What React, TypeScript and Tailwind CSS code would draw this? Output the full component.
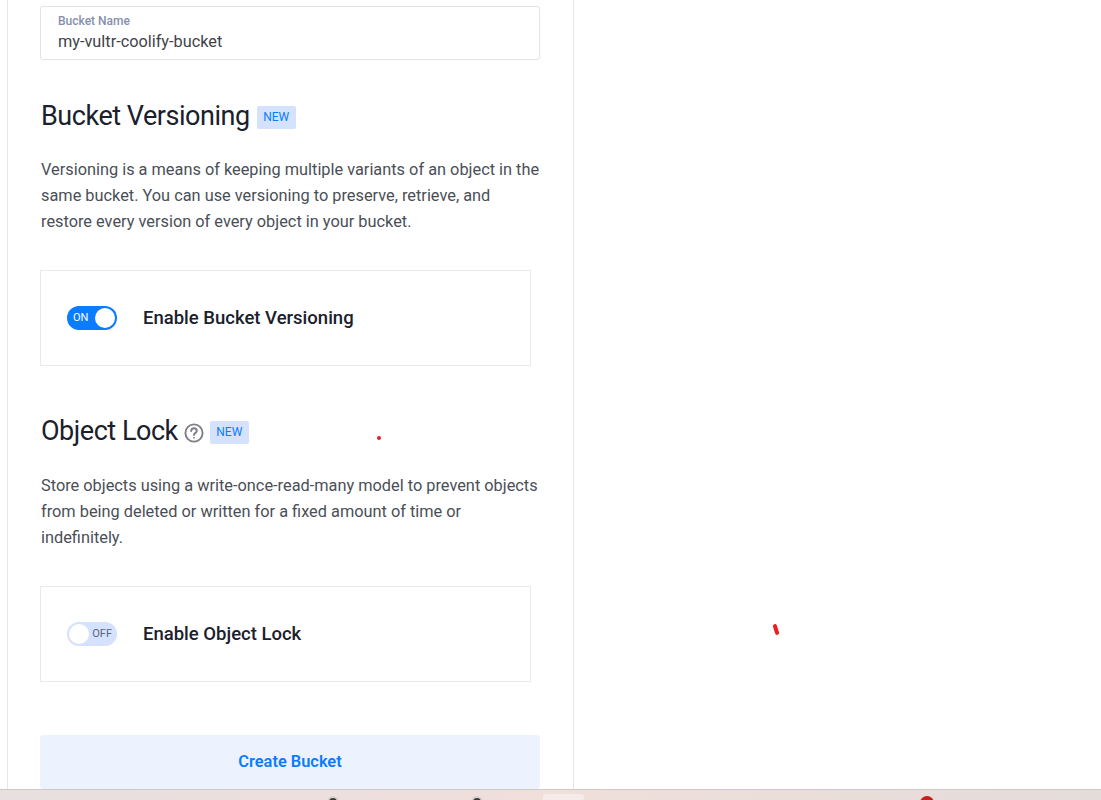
import React from 'react';

function NewBadge() {
  return (
    <span className="flex h-[23px] w-[39px] items-center justify-center rounded-[2px] bg-[#d5e2fd] text-[12px] text-[#0a7cff]">
      NEW
    </span>
  );
}

function HelpIcon() {
  return (
    <svg className="h-[20px] w-[20px]" viewBox="0 0 20 20" fill="none" stroke="#7d7f85" strokeWidth="1.9">
      <circle cx="10" cy="10" r="8.6" />
      <path d="M7.2 8a2.8 2.8 0 0 1 5.6 0c0 1.8-2.8 2-2.8 4" strokeLinecap="round" />
      <circle cx="10" cy="14.8" r="0.9" fill="#7d7f85" stroke="none" />
    </svg>
  );
}

function Toggle({ on }: { on: boolean }) {
  if (on) {
    return (
      <div className="flex h-[24px] w-[50px] items-center justify-between rounded-full bg-[#0a7cff] pl-[6px] pr-[2px]">
        <span className="text-[11px] font-normal text-white">ON</span>
        <span className="h-[20px] w-[20px] rounded-full bg-white" />
      </div>
    );
  }
  return (
    <div className="flex h-[24px] w-[50px] items-center justify-between rounded-full bg-[#d5e2fd] pl-[2px] pr-[5px]">
      <span className="h-[20px] w-[20px] rounded-full bg-white" />
      <span className="text-[11px] font-normal text-[#5c6478]">OFF</span>
    </div>
  );
}

function ToggleCard({ on, label }: { on: boolean; label: string }) {
  return (
    <div className="flex h-[96px] w-[491px] items-center gap-[26px] border border-[#eaeaea] pl-[26px]">
      <Toggle on={on} />
      <span className="pt-[2px] text-[18.5px] font-medium text-[#1a202c]">{label}</span>
    </div>
  );
}

export default function App() {
  return (
    <div className="relative flex h-screen flex-col overflow-hidden bg-white font-['Roboto',sans-serif]">
      <div className="flex-1 overflow-hidden">
        <div className="ml-[7px] h-full w-[567px] border-x border-[#e6e6e6] pl-[32px] pt-[6px]">
          <div className="h-[54px] w-[500px] rounded-[3px] border border-[#e3e3e3] pl-[17px] pt-[7px]">
            <div className="text-[12px] font-medium leading-[14px] text-[#8690ad]">Bucket Name</div>
            <div className="mt-[1px] text-[16.3px] leading-[25px] text-[#3f4349]">my-vultr-coolify-bucket</div>
          </div>

          <div className="mt-[39px] flex h-[36px] items-center gap-[7px] pl-[1px]">
            <h2 className="pb-[2px] text-[27px] leading-[36px] tracking-[-0.47px] text-[#1a202c]">Bucket Versioning</h2>
            <NewBadge />
          </div>
          <p className="mt-[22px] w-[500px] pl-[1px] text-[16.33px] leading-[26px] text-[#4a4f57]">
            Versioning is a means of keeping multiple variants of an object in the same bucket. You can use versioning to preserve, retrieve, and restore every version of every object in your bucket.
          </p>
          <div className="mt-[35px]">
            <ToggleCard on label="Enable Bucket Versioning" />
          </div>

          <div className="mt-[48px] flex h-[36px] items-center pl-[1px]">
            <h2 className="pb-[2px] text-[27px] leading-[36px] tracking-[-0.47px] text-[#1a202c]">Object Lock</h2>
            <span className="ml-[6px] pt-[2px]"><HelpIcon /></span>
            <span className="ml-[6px]"><NewBadge /></span>
          </div>
          <p className="mt-[23px] w-[500px] pl-[1px] text-[16.33px] leading-[26px] text-[#4a4f57]">
            Store objects using a write-once-read-many model to prevent objects from being deleted or written for a fixed amount of time or indefinitely.
          </p>
          <div className="mt-[35px]">
            <ToggleCard on={false} label="Enable Object Lock" />
          </div>

          <button className="mt-[53px] flex h-[54px] w-[500px] items-center justify-center rounded-[3px] bg-[#ecf3fe] text-[16.4px] font-semibold text-[#0a7cff]">
            Create Bucket
          </button>
        </div>
      </div>

      {/* taskbar peeking in at the bottom edge */}
      <div className="relative h-[11px] shrink-0 overflow-hidden border-t border-[#cfc8c6] bg-gradient-to-r from-[#e8dfe0] via-[#f0dfdb] to-[#e4dcd9]">
        <span className="absolute left-[327px] top-[6px] h-[12px] w-[12px] rounded-full border-2 border-[#d8d0d0] bg-[#3d3533]" />
        <span className="absolute left-[471px] top-[6px] h-[12px] w-[12px] rounded-full border-2 border-[#d8d0d0] bg-[#3d3533]" />
        <span className="absolute left-[543px] top-[4px] h-[12px] w-[41px] rounded-t-[3px] bg-[#f5ecea]" />
        <span className="absolute left-[920px] top-[6px] h-[14px] w-[14px] rounded-full bg-[#c4201c]" />
      </div>

      {/* stray annotation marks */}
      <span className="absolute left-[377px] top-[436px] h-[4px] w-[4px] rounded-full bg-[#ee1c25]" />
      <span className="absolute left-[774px] top-[624px] h-[11px] w-[4px] -rotate-[18deg] rounded-full bg-[#ee1c25]" />
    </div>
  );
}
